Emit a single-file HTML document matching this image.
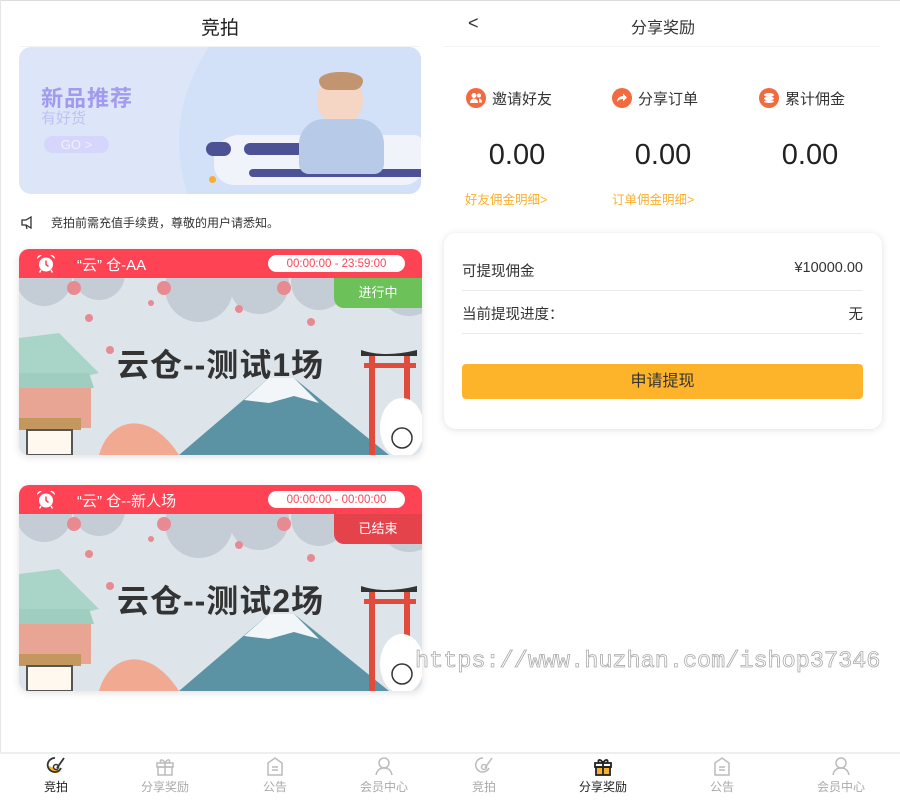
<!DOCTYPE html>
<html><head><meta charset="utf-8">
<style>
*{margin:0;padding:0;box-sizing:border-box}
body{width:900px;height:802px;background:#fff;position:relative;overflow:hidden;font-family:"Liberation Sans","Noto Sans CJK SC",sans-serif;color:#333}
.abs{position:absolute}
.topline{left:0;top:0;width:900px;height:1px;background:#ddd}
.lline{left:0;top:0;width:1px;height:802px;background:#e5e5e5}
.title{font-size:19px;color:#222;text-align:center}
.banner{left:19px;top:47px;width:402px;height:147px;border-radius:12px;background:#dde6f8;overflow:hidden}
.card{left:19px;width:403px;border-radius:10px;overflow:hidden;box-shadow:0 2px 8px rgba(0,0,0,.12)}
.chead{height:29px;background:#fd4354;color:#fff;font-size:15px;position:relative}
.time{position:absolute;right:17px;top:6px;height:17px;width:137px;background:#fff;border-radius:9px;color:#fd4354;font-size:11.5px;text-align:center;line-height:15px;padding-top:2px}
.cimg{position:relative;height:177px;background:#dfe6ec;overflow:hidden}
.badge{position:absolute;right:0;top:0;width:88px;height:30px;border-bottom-left-radius:10px;color:#fff;font-size:13px;text-align:center;line-height:30px}
.big{position:absolute;left:0;right:0;top:62px;text-align:center;font-size:32px;font-weight:bold;color:#333;letter-spacing:1px}
.stat{font-size:15px;color:#333}
.ico{display:inline-block;width:20px;height:20px;border-radius:50%;background:#f26a3f;vertical-align:-4px;margin-right:6px;position:relative}
.num{font-size:29px;color:#222;text-align:center;width:100px;font-weight:300}
.link{font-size:12.5px;color:#fbb02d}
.tab{top:756px;width:110px;text-align:center;font-size:12px;color:#aaa}
.tab svg{display:block;margin:0 auto 2px}
</style></head><body>
<div class="abs topline"></div>
<div class="abs lline"></div>

<div class="abs title" style="left:0;width:440px;top:13px">竞拍</div>
<div class="abs" style="left:19px;top:46px;width:402px;height:1px;background:#f3f3f3"></div>
<div class="abs banner">
  <div class="abs" style="left:160px;top:-70px;width:330px;height:330px;border-radius:50%;background:#d2e0f8"></div>
  <div class="abs" style="left:22px;top:34px;font-size:22px;font-weight:bold;color:#a29af0;letter-spacing:1px">新品推荐</div>
  <div class="abs" style="left:22px;top:60px;font-size:15px;color:#bfc0f3">有好货</div>
  <div class="abs" style="left:25px;top:89px;width:65px;height:17px;border-radius:9px;background:#d6d5fb;color:#f0f0ff;font-size:13px;line-height:17px;text-align:center">GO &gt;</div>
  <div class="abs" style="left:195px;top:88px;width:210px;height:50px;border-radius:25px 10px 20px 20px;background:#f1f3fa"></div>
  <div class="abs" style="left:225px;top:96px;width:60px;height:12px;border-radius:6px;background:#4d5196"></div>
  <div class="abs" style="left:230px;top:122px;width:180px;height:8px;border-radius:4px;background:#4d5196"></div>
  <div class="abs" style="left:187px;top:95px;width:25px;height:14px;border-radius:7px;background:#4d5196"></div>
  <div class="abs" style="left:298px;top:28px;width:46px;height:50px;border-radius:50%;background:#f5d6c4"></div>
  <div class="abs" style="left:300px;top:25px;width:44px;height:18px;border-radius:50% 50% 10px 10px;background:#c2946f"></div>
  <div class="abs" style="left:280px;top:72px;width:85px;height:55px;border-radius:25px 25px 10px 10px;background:#b7cbe8"></div>
  <div class="abs" style="left:190px;top:129px;width:7px;height:7px;border-radius:50%;background:#fbac2c"></div>
</div>
<div class="abs" style="left:21px;top:215px;width:15px;height:14px">
<svg width="15" height="15" viewBox="0 0 15 15" fill="none" stroke="#333" stroke-width="1.3"><path d="M1 5h4l5-3v11l-5-3H1z"/><path d="M5 10l1 4"/></svg></div>
<div class="abs" style="left:51px;top:214px;font-size:12px;color:#333">竞拍前需充值手续费，尊敬的用户请悉知。</div>

<div class="abs card" style="top:249px">
  <div class="chead">
    <svg class="abs" style="left:17px;top:5px" width="20" height="19" viewBox="0 0 20 19"><circle cx="10" cy="10.5" r="7" fill="#fff"/><path d="M1 5a4 4 0 0 1 5-4z M19 5a4 4 0 0 0-5-4z" fill="#fff"/><path d="M10 6.5v4l2.5 2" stroke="#fd4354" stroke-width="1.5" fill="none"/><path d="M5 16l-1.5 2.5M15 16l1.5 2.5" stroke="#fff" stroke-width="1.5"/></svg>
    <span class="abs" style="left:58px;top:5px">“云” 仓-AA</span>
    <div class="time">00:00:00 - 23:59:00</div>
  </div>
  <div class="cimg">
    <svg class="abs" style="left:0;top:0" width="403" height="177" viewBox="0 0 403 177">
      <rect width="403" height="177" fill="#dde5eb"/>
      <g fill="#c4ccd6"><circle cx="25" cy="0" r="28"/><circle cx="80" cy="-4" r="26"/><circle cx="180" cy="10" r="34"/><circle cx="240" cy="6" r="30"/><circle cx="300" cy="4" r="28"/><circle cx="390" cy="8" r="30"/></g>
      <g fill="#e88a92"><circle cx="55" cy="10" r="7"/><circle cx="145" cy="10" r="7"/><circle cx="265" cy="10" r="7"/><circle cx="70" cy="40" r="4"/><circle cx="132" cy="25" r="3"/><circle cx="220" cy="31" r="4"/><circle cx="292" cy="44" r="4"/><circle cx="91" cy="72" r="4"/></g>
      <path d="M0 60 L40 55 L80 95 L60 100 L0 95Z" fill="#a8d5c8"/>
      <path d="M0 95 L70 95 L75 110 L0 110Z" fill="#9fcdbf"/>
      <rect x="0" y="110" width="72" height="40" fill="#e8a594"/>
      <rect x="0" y="140" width="62" height="12" fill="#c4975f"/>
      <rect x="8" y="152" width="45" height="25" fill="#fff8ee" stroke="#555" stroke-width="2"/>
      <path d="M80 177 C90 140 130 130 160 177Z" fill="#f2a992"/>
      <path d="M160 177 L250 100 L275 100 L370 177Z" fill="#5b93a4"/>
      <path d="M225 122 L250 100 L275 100 L300 125 L275 118 L250 125Z" fill="#f3f6f8"/>
      <path d="M342 72 Q365 80 398 72 L398 78 L342 78Z" fill="#333"/>
      <rect x="345" y="85" width="52" height="5" fill="#e14b3b"/>
      <rect x="350" y="78" width="6" height="99" fill="#e14b3b"/><rect x="385" y="78" width="6" height="99" fill="#e14b3b"/>
      <ellipse cx="383" cy="150" rx="22" ry="30" fill="#fff"/>
      <circle cx="383" cy="160" r="10" fill="none" stroke="#333" stroke-width="1.5"/>
    </svg>
    <div class="big">云仓--测试1场</div>
    <div class="badge" style="background:#6cc159">进行中</div>
  </div>
</div>

<div class="abs card" style="top:485px">
  <div class="chead">
    <svg class="abs" style="left:17px;top:5px" width="20" height="19" viewBox="0 0 20 19"><circle cx="10" cy="10.5" r="7" fill="#fff"/><path d="M1 5a4 4 0 0 1 5-4z M19 5a4 4 0 0 0-5-4z" fill="#fff"/><path d="M10 6.5v4l2.5 2" stroke="#fd4354" stroke-width="1.5" fill="none"/><path d="M5 16l-1.5 2.5M15 16l1.5 2.5" stroke="#fff" stroke-width="1.5"/></svg>
    <span class="abs" style="left:58px;top:5px">“云” 仓--新人场</span>
    <div class="time">00:00:00 - 00:00:00</div>
  </div>
  <div class="cimg">
    <svg class="abs" style="left:0;top:0" width="403" height="177" viewBox="0 0 403 177">
      <rect width="403" height="177" fill="#dde5eb"/>
      <g fill="#c4ccd6"><circle cx="25" cy="0" r="28"/><circle cx="80" cy="-4" r="26"/><circle cx="180" cy="10" r="34"/><circle cx="240" cy="6" r="30"/><circle cx="300" cy="4" r="28"/><circle cx="390" cy="8" r="30"/></g>
      <g fill="#e88a92"><circle cx="55" cy="10" r="7"/><circle cx="145" cy="10" r="7"/><circle cx="265" cy="10" r="7"/><circle cx="70" cy="40" r="4"/><circle cx="132" cy="25" r="3"/><circle cx="220" cy="31" r="4"/><circle cx="292" cy="44" r="4"/><circle cx="91" cy="72" r="4"/></g>
      <path d="M0 60 L40 55 L80 95 L60 100 L0 95Z" fill="#a8d5c8"/>
      <path d="M0 95 L70 95 L75 110 L0 110Z" fill="#9fcdbf"/>
      <rect x="0" y="110" width="72" height="40" fill="#e8a594"/>
      <rect x="0" y="140" width="62" height="12" fill="#c4975f"/>
      <rect x="8" y="152" width="45" height="25" fill="#fff8ee" stroke="#555" stroke-width="2"/>
      <path d="M80 177 C90 140 130 130 160 177Z" fill="#f2a992"/>
      <path d="M160 177 L250 100 L275 100 L370 177Z" fill="#5b93a4"/>
      <path d="M225 122 L250 100 L275 100 L300 125 L275 118 L250 125Z" fill="#f3f6f8"/>
      <path d="M342 72 Q365 80 398 72 L398 78 L342 78Z" fill="#333"/>
      <rect x="345" y="85" width="52" height="5" fill="#e14b3b"/>
      <rect x="350" y="78" width="6" height="99" fill="#e14b3b"/><rect x="385" y="78" width="6" height="99" fill="#e14b3b"/>
      <ellipse cx="383" cy="150" rx="22" ry="30" fill="#fff"/>
      <circle cx="383" cy="160" r="10" fill="none" stroke="#333" stroke-width="1.5"/>
    </svg>
    <div class="big">云仓--测试2场</div>
    <div class="badge" style="background:#e5434c">已结束</div>
  </div>
</div>

<div class="abs" style="left:468px;top:13px;font-size:18px;color:#333">&lt;</div>
<div class="abs title" style="left:443px;width:440px;top:14px;font-size:16px;color:#333">分享奖励</div>
<div class="abs" style="left:443px;top:46px;width:437px;height:1px;background:#f3f3f3"></div>

<div class="abs stat" style="left:466px;top:88px"><span class="ico"><svg class="abs" style="left:3px;top:3px" width="14" height="14" viewBox="0 0 14 14" fill="#fff"><circle cx="5" cy="4.5" r="2.5"/><circle cx="10" cy="4.5" r="2"/><path d="M1 12c0-3 2-4.5 4-4.5s4 1.5 4 4.5z"/><path d="M10 7.5c2 0 3 1.5 3 4h-3z"/></svg></span>邀请好友</div>
<div class="abs stat" style="left:612px;top:88px"><span class="ico"><svg class="abs" style="left:4px;top:4px" width="12" height="12" viewBox="0 0 12 12"><path d="M1 10c0-4 3-6 6-6V1.5L11 5.5 7 9.5V7c-3 0-4.5 1-6 3z" fill="#fff"/></svg></span>分享订单</div>
<div class="abs stat" style="left:759px;top:88px"><span class="ico"><svg class="abs" style="left:4px;top:5px" width="12" height="10" viewBox="0 0 12 10" fill="#fff"><ellipse cx="6" cy="2" rx="5" ry="2"/><ellipse cx="6" cy="5.5" rx="5" ry="1.8"/><ellipse cx="6" cy="8.5" rx="5" ry="1.5"/></svg></span>累计佣金</div>

<div class="abs num" style="left:467px;top:139px">0.00</div>
<div class="abs num" style="left:613px;top:139px">0.00</div>
<div class="abs num" style="left:760px;top:139px">0.00</div>
<div class="abs link" style="left:465px;top:189px">好友佣金明细&gt;</div>
<div class="abs link" style="left:612px;top:189px">订单佣金明细&gt;</div>

<div class="abs" style="left:444px;top:233px;width:438px;height:196px;border-radius:12px;background:#fff;box-shadow:0 1px 8px rgba(0,0,0,.12)">
  <div class="abs" style="left:18px;top:27px;font-size:14.5px;color:#333">可提现佣金</div>
  <div class="abs" style="right:19px;top:27px;font-size:14.5px;color:#333">¥10000.00</div>
  <div class="abs" style="left:18px;top:57px;width:401px;height:1px;background:#eaeaea"></div>
  <div class="abs" style="left:18px;top:70px;font-size:14.5px;color:#333">当前提现进度：</div>
  <div class="abs" style="right:19px;top:70px;font-size:14.5px;color:#333">无</div>
  <div class="abs" style="left:18px;top:100px;width:401px;height:1px;background:#eaeaea"></div>
  <div class="abs" style="left:18px;top:131px;width:401px;height:35px;border-radius:4px;background:#fdb42a;font-size:16px;color:#333;text-align:center;line-height:35px">申请提现</div>
</div>

<div class="abs" style="left:415px;top:648px;font-family:'Liberation Mono',monospace;font-size:23.5px;color:#fff;-webkit-text-stroke:0.8px #aaa;white-space:nowrap">https://www.huzhan.com/ishop37346</div>

<div class="abs" style="left:0;top:752px;width:900px;height:2px;background:#eee"></div>
<div class="abs" style="left:0;top:754px;width:900px;height:48px;background:#fff"></div>
<div class="abs tab" style="left:1px;color:#222"><svg width="22" height="20" viewBox="0 0 22 20"><path d="M4 10a7 7 0 0 0 12 5" fill="#fbb02d"/><path d="M10 2a7 7 0 1 0 6 10" stroke="#333" stroke-width="1.8" fill="none"/><path d="M12 12l7-10" stroke="#333" stroke-width="1.8"/><circle cx="11" cy="11" r="2.5" fill="none" stroke="#333" stroke-width="1.5"/></svg>竞拍</div>
<div class="abs tab" style="left:110px"><svg width="22" height="20" viewBox="0 0 22 20" fill="none" stroke="#bbb" stroke-width="1.5"><rect x="3" y="7" width="16" height="4"/><rect x="4" y="11" width="14" height="8"/><path d="M11 7v12M11 7C8 2 5 4 7 7M11 7c3-5 6-3 4 0"/></svg>分享奖励</div>
<div class="abs tab" style="left:220px"><svg width="22" height="20" viewBox="0 0 22 20" fill="none" stroke="#bbb" stroke-width="1.5"><path d="M4 7l7-5 7 5v12H4z"/><path d="M8 11h6M8 14h6"/></svg>公告</div>
<div class="abs tab" style="left:329px"><svg width="22" height="20" viewBox="0 0 22 20" fill="none" stroke="#bbb" stroke-width="1.5"><circle cx="11" cy="7" r="5"/><path d="M3 19c1-5 4-7 8-7s7 2 8 7"/></svg>会员中心</div>
<div class="abs tab" style="left:429px"><svg width="22" height="20" viewBox="0 0 22 20" fill="none" stroke="#bbb" stroke-width="1.5"><path d="M10 2a7 7 0 1 0 6 10"/><path d="M12 12l7-10"/><circle cx="11" cy="11" r="2.5"/></svg>竞拍</div>
<div class="abs tab" style="left:548px;color:#222"><svg width="22" height="20" viewBox="0 0 22 20"><rect x="4" y="11" width="14" height="8" fill="#fbb02d"/><g fill="none" stroke="#222" stroke-width="1.8"><rect x="3" y="7" width="16" height="4"/><rect x="4" y="11" width="14" height="8"/><path d="M11 7v12M11 7C8 2 5 4 7 7M11 7c3-5 6-3 4 0"/></g></svg>分享奖励</div>
<div class="abs tab" style="left:667px"><svg width="22" height="20" viewBox="0 0 22 20" fill="none" stroke="#bbb" stroke-width="1.5"><path d="M4 7l7-5 7 5v12H4z"/><path d="M8 11h6M8 14h6"/></svg>公告</div>
<div class="abs tab" style="left:786px"><svg width="22" height="20" viewBox="0 0 22 20" fill="none" stroke="#bbb" stroke-width="1.5"><circle cx="11" cy="7" r="5"/><path d="M3 19c1-5 4-7 8-7s7 2 8 7"/></svg>会员中心</div>
</body></html>
